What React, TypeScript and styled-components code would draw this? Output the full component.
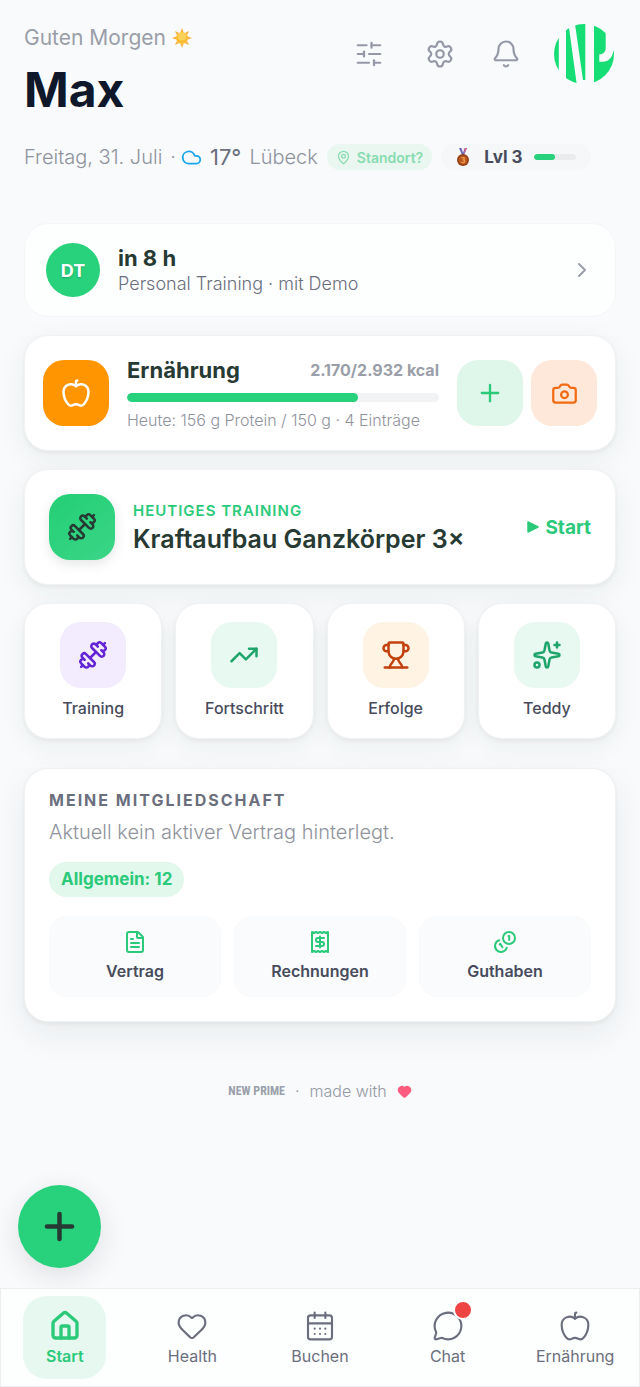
import React from "react";
import styled, { createGlobalStyle } from "styled-components";
import {
  Apple,
  Bell,
  CalendarDays,
  Camera,
  ChevronRight,
  Cloud,
  Dumbbell,
  FileText,
  Heart,
  House,
  MapPin,
  MessageCircle,
  Plus,
  Settings,
  SlidersHorizontal,
  Sparkles,
  TrendingUp,
} from "lucide-react";

const color = {
  page: "#f8fafc",
  green: "#28d17c",
  greenText: "#2bc97a",
  ink: "#263a33",
  navy: "#0f172a",
  slate: "#474b5c",
  mid: "#6b6f7d",
  muted: "#9a9ea8",
  line: "#f0f2f3",
};

const GlobalStyle = createGlobalStyle`
  *, *::before, *::after { box-sizing: border-box; }
  body {
    margin: 0;
    background: ${color.page};
    font-family: Inter, "Open Sans", sans-serif;
    color: ${color.ink};
  }
  button { font: inherit; color: inherit; border: 0; padding: 0; background: none; cursor: pointer; }
  a { color: inherit; text-decoration: none; }
  h1, h2, p { margin: 0; }
  svg { display: block; flex: none; }
`;

const Page = styled.div`
  min-height: 100vh;
  padding: 24px 24px 120px;
`;

const Header = styled.header`
  display: flex;
  justify-content: space-between;
  align-items: flex-start;
`;

const Greeting = styled.p`
  display: flex;
  align-items: center;
  gap: 6px;
  font-size: 21px;
  line-height: 28px;
  color: ${color.muted};
`;

const Name = styled.h1`
  margin-top: 10px;
  font-size: 48px;
  line-height: 56px;
  font-weight: 700;
  color: ${color.navy};
`;

const Actions = styled.div`
  display: flex;
  align-items: center;
  gap: 6px;
  padding-right: 2px;
`;

const IconButton = styled.button<{ $wide?: boolean }>`
  display: flex;
  justify-content: center;
  align-items: center;
  width: ${(p) => (p.$wide ? "70px" : "60px")};
  height: 60px;
  color: #9598a6;
`;

const LogoLink = styled.a`
  margin-left: 12px;
`;

const MetaRow = styled.div`
  display: flex;
  align-items: center;
  margin-top: 25px;
  height: 28px;
  font-size: 20px;
  font-weight: 300;
  color: #8f939d;
  white-space: nowrap;
`;

const DateText = styled.span`
  display: flex;
  gap: 8px;
`;

const Weather = styled.span`
  display: flex;
  align-items: center;
  gap: 8px;
  margin: 0 9px 0 5px;
`;

const Temperature = styled.span`
  font-size: 22px;
  font-weight: 400;
  color: ${color.mid};
`;

const LocationPill = styled.button`
  display: flex;
  align-items: center;
  gap: 6px;
  height: 26px;
  padding: 0 9px;
  border-radius: 13px;
  background: #e9f7f0;
  color: #86dcb0;
  font-size: 14px;
  font-weight: 600;
`;

const LevelPill = styled.div`
  display: flex;
  align-items: center;
  gap: 11px;
  height: 26px;
  margin-left: 9px;
  padding: 0 15px 0 12px;
  border-radius: 13px;
  background: #f5f7f8;
  color: ${color.slate};
  font-size: 17px;
  font-weight: 700;
`;

const Track = styled.span<{ $size: "small" | "large" }>`
  display: block;
  width: ${(p) => (p.$size === "small" ? "42px" : "100%")};
  height: ${(p) => (p.$size === "small" ? "6px" : "9px")};
  border-radius: 5px;
  background: ${(p) => (p.$size === "small" ? "#e9ebec" : "#f2f3f4")};
  overflow: hidden;
`;

const Fill = styled.span`
  display: block;
  height: 100%;
  border-radius: 5px;
  background: ${color.green};
`;

const Stack = styled.main`
  display: flex;
  flex-direction: column;
  gap: 18px;
  margin-top: 52px;
`;

const Card = styled.section<{ $pad: string; $flat?: boolean }>`
  display: flex;
  align-items: center;
  gap: 18px;
  padding: ${(p) => p.$pad};
  border: 1px solid ${(p) => (p.$flat ? "#f4f6f7" : color.line)};
  border-radius: 24px;
  background: ${(p) => (p.$flat ? "#fdfefe" : "#ffffff")};
  box-shadow: ${(p) =>
    p.$flat ? "none" : "0 2px 4px rgba(30, 45, 40, 0.06), 0 8px 30px rgba(30, 45, 40, 0.06)"};
`;

const Grow = styled.div`
  flex: 1;
  min-width: 0;
`;

const Avatar = styled.span`
  display: flex;
  justify-content: center;
  align-items: center;
  width: 54px;
  height: 54px;
  border-radius: 50%;
  background: ${color.green};
  color: #ffffff;
  font-size: 18px;
  font-weight: 700;
  text-shadow: 0 1px 2px rgba(0, 0, 0, 0.2);
`;

const Title = styled.h2<{ $large?: boolean }>`
  font-size: ${(p) => (p.$large ? "25px" : "22px")};
  line-height: ${(p) => (p.$large ? "32px" : "28px")};
  font-weight: ${(p) => (p.$large ? 600 : 700)};
  white-space: nowrap;
`;

const Subtitle = styled.p`
  font-size: 18px;
  line-height: 24px;
  font-weight: 300;
  color: #6b6f7d;
`;

const tones = {
  orange: ["#ff9500", "#ffffff"],
  green: ["linear-gradient(145deg, #23cf75, #3ad587)", "#263a33"],
  mint: ["#dff6ea", "#2bc97a"],
  peach: ["#fee8da", "#f26a12"],
  violet: ["#f2ecfe", "#6424d6"],
  pale: ["#e8f9f1", "#1fa56c"],
  cream: ["#fff3e3", "#c2410c"],
};

const IconTile = styled.span<{ $tone: keyof typeof tones; $raised?: boolean }>`
  display: flex;
  flex: none;
  justify-content: center;
  align-items: center;
  width: 66px;
  height: 66px;
  border-radius: 21px;
  background: ${(p) => tones[p.$tone][0]};
  color: ${(p) => tones[p.$tone][1]};
  box-shadow: ${(p) => (p.$raised ? "0 4px 12px rgba(30, 50, 45, 0.12)" : "none")};
`;

const ButtonPair = styled.div`
  display: flex;
  gap: 8px;
`;

const Spread = styled.div`
  display: flex;
  justify-content: space-between;
  align-items: center;
  margin-bottom: 9px;
`;

const Calories = styled.span`
  font-size: 16px;
  font-weight: 700;
  color: ${color.muted};
`;

const Detail = styled.p`
  margin-top: 8px;
  font-size: 16px;
  line-height: 20px;
  font-weight: 300;
  color: #8f939d;
  white-space: nowrap;
`;

const Eyebrow = styled.p`
  font-size: 15px;
  line-height: 24px;
  font-weight: 600;
  letter-spacing: 1px;
  color: ${color.greenText};
`;

const StartButton = styled.button`
  display: flex;
  align-items: center;
  gap: 6px;
  color: ${color.greenText};
  font-size: 19px;
  font-weight: 700;
`;

const TileGrid = styled.nav`
  display: grid;
  grid-template-columns: repeat(4, 1fr);
  gap: 13px;
`;

const Tile = styled.a`
  display: flex;
  flex-direction: column;
  align-items: center;
  gap: 8px;
  padding: 18px 4px;
  border: 1px solid ${color.line};
  border-radius: 24px;
  background: #ffffff;
  box-shadow: 0 2px 4px rgba(30, 45, 40, 0.05), 0 8px 26px rgba(30, 45, 40, 0.06);
  color: ${color.slate};
  font-size: 16px;
  line-height: 24px;
  font-weight: 500;
`;

const Membership = styled.section`
  margin-top: 11px;
  padding: 21px 24px 24px;
  border: 1px solid ${color.line};
  border-radius: 24px;
  background: #ffffff;
  box-shadow: 0 2px 4px rgba(30, 45, 40, 0.06), 0 12px 34px rgba(30, 45, 40, 0.07);
`;

const SectionLabel = styled.h2`
  font-size: 16px;
  line-height: 20px;
  font-weight: 700;
  letter-spacing: 2px;
  color: ${color.mid};
`;

const Note = styled.p`
  margin-top: 8px;
  font-size: 20px;
  line-height: 28px;
  font-weight: 300;
  color: #8f939d;
`;

const Chip = styled.span`
  display: inline-block;
  margin-top: 16px;
  padding: 0 12px;
  border-radius: 18px;
  background: #e2f8ec;
  color: ${color.greenText};
  font-size: 17px;
  line-height: 35px;
  font-weight: 700;
`;

const MiniGrid = styled.div`
  display: grid;
  grid-template-columns: repeat(3, 1fr);
  gap: 13px;
  margin-top: 19px;
`;

const MiniTile = styled.a`
  display: flex;
  flex-direction: column;
  align-items: center;
  gap: 5px;
  padding: 13px 4px;
  border: 1px solid #f8fafb;
  border-radius: 18px;
  background: #f9fbfc;
  color: ${color.slate};
  font-size: 16px;
  line-height: 24px;
  font-weight: 600;

  svg { color: ${color.greenText}; }
`;

const Footer = styled.footer`
  display: flex;
  justify-content: center;
  align-items: center;
  gap: 10px;
  margin-top: 57px;
  line-height: 24px;
  font-size: 16px;
  font-weight: 300;
  color: #9599a3;
`;

const Brand = styled.span`
  font-family: "Liberation Sans Narrow", "Roboto Condensed", Roboto, sans-serif;
  font-size: 12px;
  font-weight: 700;
  color: #9aa0aa;
`;

const AddButton = styled.button`
  position: fixed;
  left: 18px;
  bottom: 119px;
  display: flex;
  justify-content: center;
  align-items: center;
  width: 83px;
  height: 83px;
  border-radius: 50%;
  background: ${color.green};
  color: ${color.ink};
  box-shadow: 0 8px 28px rgba(30, 30, 45, 0.12);
`;

const TabBar = styled.nav`
  position: fixed;
  left: 0;
  right: 0;
  bottom: 0;
  display: flex;
  padding: 7px 0;
  border: 1px solid #eceef0;
  background: #fdfefe;
`;

const TabSlot = styled.div`
  display: flex;
  flex: 1;
  justify-content: center;
`;

const Tab = styled.a<{ $active?: boolean }>`
  position: relative;
  display: flex;
  flex-direction: column;
  align-items: center;
  gap: 3px;
  min-width: 83px;
  padding: 14px 0 12px;
  border-radius: 24px;
  background: ${(p) => (p.$active ? "#e6f8ef" : "transparent")};
  color: ${(p) => (p.$active ? color.greenText : color.mid)};
  font-size: 16px;
  line-height: 22px;
  font-weight: ${(p) => (p.$active ? 600 : 400)};
`;

const UnreadDot = styled.span`
  position: absolute;
  top: 4px;
  right: 16px;
  width: 20px;
  height: 20px;
  border: 2px solid #fdfefe;
  border-radius: 50%;
  background: #ef4444;
`;

const SunIcon = () => (
  <svg width="20" height="20" viewBox="0 0 20 20" aria-hidden="true">
    <path
      fill="#f6b23c"
      d="M10 0l1.500 4h-3zM10 20l1.500-4h-3zM0 10l4-1.500v3zM20 10l-4-1.500v3zM2.900 2.900l3.900 1.800-2.100 2.100zM17.100 2.900l-1.800 3.900-2.100-2.100zM2.900 17.100l1.800-3.900 2.100 2.100zM17.100 17.100l-3.900-1.800 2.100-2.100z"
    />
    <circle cx="10" cy="10" r="6" fill="#fdbb2d" />
    <circle cx="10" cy="8.500" r="4" fill="#fed25a" />
  </svg>
);

const MedalIcon = () => (
  <svg width="20" height="20" viewBox="0 0 20 20" aria-hidden="true">
    <path d="M6 1h8l-3 7H9z" fill="#6a63b8" />
    <path d="M8.300 1h3.400L10 6z" fill="#f4e9ef" />
    <path d="M12 1h2l-3 6z" fill="#e2647c" />
    <circle cx="10" cy="13" r="6" fill="#8f3d14" />
    <circle cx="10" cy="13" r="4.600" fill="#b9561f" />
    <path
      d="M8.500 11.200c1-1.200 3-.6 2.900.5 0 .8-.8 1.200-1.600 1.200 1 0 1.900.4 1.900 1.400 0 1.300-2.300 1.800-3.300.6"
      fill="none"
      stroke="#f2a04a"
      strokeWidth="1.200"
    />
  </svg>
);

const Logo = () => (
  <svg width="60" height="60" viewBox="0 0 60 60" role="img" aria-label="New Prime">
    <defs>
      <clipPath id="logo-disc">
        <circle cx="30" cy="30" r="30" />
      </clipPath>
    </defs>
    <g fill="#16de75" clipPath="url(#logo-disc)">
      <path d="M0 0H4.800V60H0z" />
      <path d="M12 6.500L15 3.500L22.700 60H12z" />
      <path d="M21 0H31.300V56H29z" />
      <path d="M40 0H51.700V24C51.700 28 49 30.300 45.300 30.300V37.700H49C54.500 37.700 58.500 33.500 59.300 27H62V60H40z" />
    </g>
  </svg>
);

/* Stroke frame shared by the hand-drawn line icons */
const LineIcon = ({ size, children }: { size: number; children: React.ReactNode }) => (
  <svg
    width={size}
    height={size}
    viewBox="0 0 24 24"
    fill="none"
    stroke="currentColor"
    strokeWidth="2"
    strokeLinecap="round"
    strokeLinejoin="round"
    aria-hidden="true"
  >
    {children}
  </svg>
);

const TrophyIcon = () => (
  <LineIcon size={30}>
    <path d="M6 9H4.500a2.500 2.500 0 0 1 0-5H6" />
    <path d="M18 9h1.500a2.500 2.500 0 0 0 0-5H18" />
    <path d="M3 22h18" />
    <path d="M10.500 15C10.300 18 7 19 7 22" />
    <path d="M13.500 15C13.700 18 17 19 17 22" />
    <path d="M18 3a1 1 0 0 0-1-1H7a1 1 0 0 0-1 1v6a6 6 0 0 0 12 0V3Z" />
  </LineIcon>
);

const ReceiptIcon = () => (
  <LineIcon size={24}>
    <path d="M4 2v20l2-1 2 1 2-1 2 1 2-1 2 1 2-1 2 1V2l-2 1-2-1-2 1-2-1-2 1-2-1-2 1Z" />
    <path d="M16 8h-6a2 2 0 1 0 0 4h4a2 2 0 1 1 0 4H8" />
    <path d="M12 17.500v-11" />
  </LineIcon>
);

const CoinsIcon = () => (
  <LineIcon size={24}>
    <circle cx="16" cy="8" r="6" />
    <path d="M13.740 17.740a6 6 0 1 1-7.480-7.480" />
    <path d="M15.500 6h.7v4" />
    <path d="m6.700 14.400.7-.5 2 3.300" />
  </LineIcon>
);

const PlayIcon = () => (
  <svg width="12" height="12" viewBox="0 0 12 12" aria-hidden="true">
    <path d="M1 1L11 6L1 11z" fill="currentColor" stroke="currentColor" strokeWidth="1.500" strokeLinejoin="round" />
  </svg>
);

const shortcuts = [
  { label: "Training", tone: "violet", icon: <Dumbbell size={30} /> },
  { label: "Fortschritt", tone: "pale", icon: <TrendingUp size={30} /> },
  { label: "Erfolge", tone: "cream", icon: <TrophyIcon /> },
  { label: "Teddy", tone: "pale", icon: <Sparkles size={30} /> },
] as const;

const tabs = [
  { label: "Start", icon: House, active: true },
  { label: "Health", icon: Heart },
  { label: "Buchen", icon: CalendarDays },
  { label: "Chat", icon: MessageCircle, unread: true },
  { label: "Ernährung", icon: Apple },
];

export default function App() {
  const eaten = 2170;
  const goal = 2932;

  return (
    <>
      <GlobalStyle />
      <Page>
        <Header>
          <div>
            <Greeting>
              Guten Morgen <SunIcon />
            </Greeting>
            <Name>Max</Name>
          </div>
          <Actions>
            <IconButton $wide aria-label="Anpassen">
              <SlidersHorizontal size={30} strokeWidth={1.75} />
            </IconButton>
            <IconButton aria-label="Einstellungen">
              <Settings size={30} strokeWidth={1.75} />
            </IconButton>
            <IconButton aria-label="Benachrichtigungen">
              <Bell size={30} strokeWidth={1.75} />
            </IconButton>
            <LogoLink href="#profil">
              <Logo />
            </LogoLink>
          </Actions>
        </Header>

        <MetaRow>
          <DateText>
            <span>Freitag, 31. Juli</span>
            <span>·</span>
          </DateText>
          <Weather>
            <Cloud size={21} color="#17a5ee" />
            <Temperature>17°</Temperature>
            <span>Lübeck</span>
          </Weather>
          <LocationPill>
            <MapPin size={15} />
            Standort?
          </LocationPill>
          <LevelPill>
            <MedalIcon />
            Lvl 3
            <Track $size="small">
              <Fill style={{ width: "50%" }} />
            </Track>
          </LevelPill>
        </MetaRow>

        <Stack>
          <Card $pad="19px 21px" $flat>
            <Avatar>DT</Avatar>
            <Grow>
              <Title>in 8 h</Title>
              <Subtitle>Personal Training · mit Demo</Subtitle>
            </Grow>
            <ChevronRight size={24} color="#9a9ea8" />
          </Card>

          <Card $pad="20px 18px">
            <IconTile $tone="orange">
              <Apple size={30} />
            </IconTile>
            <Grow>
              <Spread>
                <Title>Ernährung</Title>
                <Calories>2.170/2.932 kcal</Calories>
              </Spread>
              <Track $size="large">
                <Fill style={{ width: `${(eaten / goal) * 100}%` }} />
              </Track>
              <Detail>Heute: 156 g Protein / 150 g · 4 Einträge</Detail>
            </Grow>
            <ButtonPair>
              <IconTile as="button" $tone="mint" aria-label="Eintrag hinzufügen">
                <Plus size={28} strokeWidth={2} />
              </IconTile>
              <IconTile as="button" $tone="peach" aria-label="Foto aufnehmen">
                <Camera size={27} />
              </IconTile>
            </ButtonPair>
          </Card>

          <Card $pad="24px">
            <IconTile $tone="green" $raised>
              <Dumbbell size={30} />
            </IconTile>
            <Grow>
              <Eyebrow>HEUTIGES TRAINING</Eyebrow>
              <Title $large>Kraftaufbau Ganzkörper 3×</Title>
            </Grow>
            <StartButton>
              <PlayIcon />
              Start
            </StartButton>
          </Card>

          <TileGrid>
            {shortcuts.map((s) => (
              <Tile href="#" key={s.label}>
                <IconTile $tone={s.tone}>{s.icon}</IconTile>
                {s.label}
              </Tile>
            ))}
          </TileGrid>

          <Membership>
            <SectionLabel>MEINE MITGLIEDSCHAFT</SectionLabel>
            <Note>Aktuell kein aktiver Vertrag hinterlegt.</Note>
            <Chip>Allgemein: 12</Chip>
            <MiniGrid>
              <MiniTile href="#vertrag">
                <FileText size={24} />
                Vertrag
              </MiniTile>
              <MiniTile href="#rechnungen">
                <ReceiptIcon />
                Rechnungen
              </MiniTile>
              <MiniTile href="#guthaben">
                <CoinsIcon />
                Guthaben
              </MiniTile>
            </MiniGrid>
          </Membership>
        </Stack>

        <Footer>
          <Brand>NEW PRIME</Brand>
          <span>·</span>
          <span>made with</span>
          <Heart size={15} color="#ff5c7f" fill="#ff5c7f" />
        </Footer>
      </Page>

      <AddButton aria-label="Hinzufügen">
        <Plus size={43} strokeWidth={2.5} />
      </AddButton>

      <TabBar>
        {tabs.map(({ label, icon: Icon, active, unread }) => (
          <TabSlot key={label}>
            <Tab href="#" $active={active}>
              <Icon size={32} strokeWidth={active ? 2.5 : 1.6} />
              {label}
              {unread && <UnreadDot />}
            </Tab>
          </TabSlot>
        ))}
      </TabBar>
    </>
  );
}
